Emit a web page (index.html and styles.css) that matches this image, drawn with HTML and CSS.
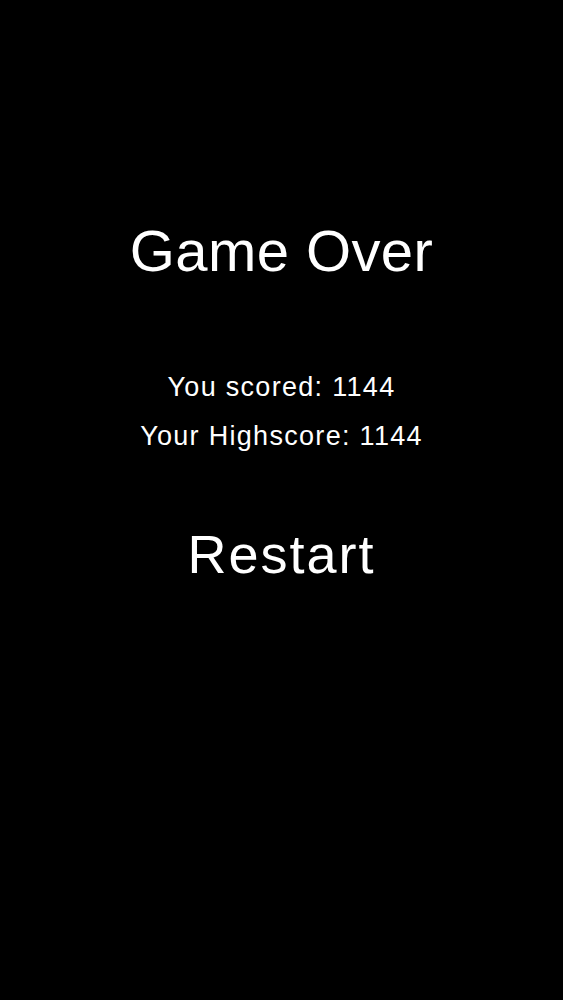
FILE: index.html
```html
<!DOCTYPE html>
<html lang="en">
<head>
    <meta charset="UTF-8">
    <meta name="viewport" content="width=device-width, initial-scale=1.0">
    <title>Game Over</title>

    <link rel="stylesheet" href="styles.css">

</head>
<body>

    <main class="gameover">
        <h1 class="title">Game Over</h1>

        <div class="scores">
            <p>You scored: <span id="score">1144</span></p>
            <p>Your Highscore: <span id="highscore">1144</span></p>
        </div>

        <button type="button" class="restart">Restart</button>
    </main>

</body>
</html>
```

FILE: styles.css
```css
body{
    margin: 0;
    background-color: #000;
    color: #fff;
    font-family: "Liberation Sans", Arial, sans-serif;
    min-height: 100vh;
}

.gameover{
    display: flex;
    flex-direction: column;
    align-items: center;
    padding-top: 216px;
}

.title{
    margin: 0;
    font-size: 58px;
    font-weight: normal;
    line-height: 70px;
    letter-spacing: 0.4px;
}

.scores{
    margin-top: 77px;
    text-align: center;
}

.scores p{
    margin: 0;
    font-size: 27px;
    line-height: 49px;
    letter-spacing: 1.3px;
}

.restart{
    margin-top: 61px;
    padding: 0;
    background: none;
    border: none;
    color: #fff;
    font-family: inherit;
    font-size: 54px;
    line-height: 64px;
    letter-spacing: 2px;
    cursor: pointer;
}
```
